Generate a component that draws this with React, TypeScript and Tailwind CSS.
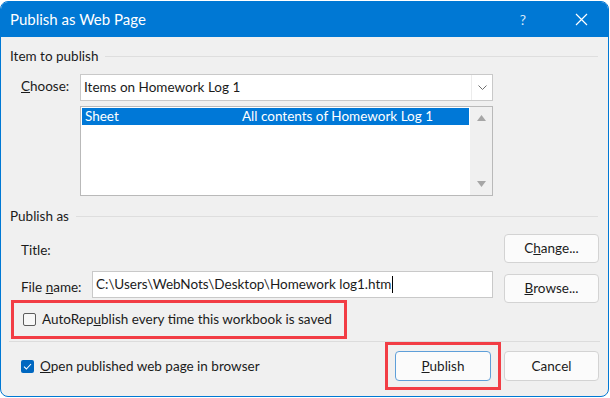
import React from "react";

const font = { fontFamily: 'Lato, "Noto Sans", sans-serif' };

export default function App() {
  return (
    <div className="h-[398px] w-[610px] bg-white pt-px" style={font}>
      <div className="flex h-[396px] w-[609px] flex-col overflow-hidden whitespace-nowrap rounded-[8px] border border-[#0078d4] bg-[#f0f0f0] text-[13.5px] text-[#1b1b1b]">
        <div className="flex h-[35px] shrink-0 items-center bg-[#0078d4] pl-[9px] text-white">
          <span className="text-[15px]">Publish as Web Page</span>
          <span className="ml-auto mr-[49px] text-[14px] text-[#d8e8f8]">?</span>
          <svg className="mr-[20px]" width="13" height="13" viewBox="0 0 13 13" stroke="white" strokeWidth="1.2">
            <path d="M1 1 L12 12 M12 1 L1 12" />
          </svg>
        </div>

        <div className="flex flex-col px-[8px]">
          <Legend label="Item to publish" className="mt-[10px]" />

          <div className="mt-[9px] flex items-start">
            <span className="mt-[2px] w-[71px] pl-[12px]"><u>C</u>hoose:</span>
            <div className="flex h-[27px] w-[413px] items-center border border-[#c9c9c9] bg-white">
              <span className="pl-[3px]">Items on Homework Log 1</span>
              <div className="ml-auto flex h-full w-[21px] items-center justify-center border-l border-[#ececec]">
                <svg width="9" height="5" viewBox="0 0 9 5" fill="none" stroke="#6f6f6f" strokeWidth="1">
                  <path d="M0.5 0.5 L4.5 4.5 L8.5 0.5" />
                </svg>
              </div>
            </div>
          </div>

          <div className="ml-[71px] mt-[5px] flex h-[90px] w-[413px] border border-[#b9b9b9] bg-white">
            <div className="flex-1 p-[1px]">
              <div className="flex h-[17px] items-center bg-[#0078d7] pl-[3px] leading-none text-white">
                <span className="w-[157px]">Sheet</span>
                <span>All contents of Homework Log 1</span>
              </div>
            </div>
            <div className="flex w-[22px] flex-col items-center justify-between bg-[#f0f0f0] py-[8px]">
              <svg width="9" height="6" viewBox="0 0 9 6"><path d="M0 6 L4.5 0 L9 6 Z" fill="#a6a6a6" /></svg>
              <svg width="9" height="6" viewBox="0 0 9 6"><path d="M0 0 L4.5 6 L9 0 Z" fill="#a6a6a6" /></svg>
            </div>
          </div>

          <Legend label="Publish as" className="mt-[11px]" />

          <div className="mt-[9px] flex items-center">
            <span className="mt-[4px] pl-[12px]">Title:</span>
            <Button className="ml-auto mr-[1px]"><>C<u>h</u>ange...</></Button>
          </div>

          <div className="mt-[8px] flex items-start">
            <span className="mt-[6px] w-[83px] pl-[12px]">File <u>n</u>ame:</span>
            <div className="flex h-[27px] w-[401px] items-center border border-[#c9c9c9] bg-white pl-[3px]">
              C:\Users\WebNots\Desktop\Homework log1.htm
              <span className="ml-px h-[17px] w-px bg-black" />
            </div>
            <Button className="ml-auto mr-[1px] mt-[3px]"><><u>B</u>rowse...</></Button>
          </div>

          <div className="-mt-[3px] ml-[2px] flex h-[39px] w-[336px] items-center border-[3px] border-[#f23d45] pl-[9px]">
            <span className="h-[13px] w-[13px] shrink-0 rounded-[2px] border border-[#5c5c5c] bg-[#f7f7f7]" />
            <span className="ml-[6px]">AutoRep<u>u</u>blish every time this workbook is saved</span>
          </div>
        </div>

        <div className="mx-[8px] mt-[2px] h-px bg-[#dcdcdc]" />

        <div className="flex items-center px-[8px] pt-[1px]">
          <span className="ml-[12px] flex h-[13px] w-[13px] shrink-0 items-center justify-center rounded-[2px] bg-[#0067c0]">
            <svg width="9" height="7" viewBox="0 0 9 7" fill="none" stroke="white" strokeWidth="1.1">
              <path d="M1 3.6 L3.4 6 L8 1" />
            </svg>
          </span>
          <span className="ml-[6px]"><u>O</u>pen published web page in browser</span>
          <div className="ml-auto -mt-px border-[3px] border-[#f23d45] px-[7px] py-[6px]">
            <button className="flex h-[30px] w-[96px] items-center justify-center rounded-[4px] border border-[#5e9fd9] bg-[#fbfbfb]">
              <u>P</u>ublish
            </button>
          </div>
          <Button className="ml-[3px] mr-[1px] -mt-px h-[30px]">Cancel</Button>
        </div>
      </div>
    </div>
  );
}

function Legend({ label, className = "" }: { label: string; className?: string }) {
  return (
    <div className={`flex h-[18px] items-center ${className}`}>
      <span className="pl-px">{label}</span>
      <span className="ml-[7px] mr-[2px] h-px flex-1 bg-[#dedede]" />
    </div>
  );
}

function Button({ children, className = "" }: { children: React.ReactNode; className?: string }) {
  return (
    <button className={`flex h-[29px] w-[95px] items-center justify-center rounded-[4px] border border-[#d3d3d3] bg-[#fbfbfb] ${className}`}>
      {children}
    </button>
  );
}
